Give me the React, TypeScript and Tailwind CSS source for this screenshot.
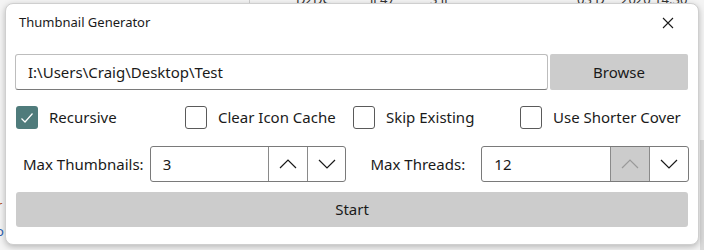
import React from "react";

const ChevronUp = ({ color = "#1a1a1a" }: { color?: string }) => (
  <svg width="18" height="10" viewBox="0 0 18 10" fill="none">
    <polyline points="1,9 9,1 17,9" stroke={color} strokeWidth="1.2" />
  </svg>
);

const ChevronDown = ({ color = "#1a1a1a" }: { color?: string }) => (
  <svg width="18" height="10" viewBox="0 0 18 10" fill="none">
    <polyline points="1,1 9,9 17,1" stroke={color} strokeWidth="1.2" />
  </svg>
);

const CheckBox = ({ label, checked }: { label: string; checked?: boolean }) => (
  <div className="flex items-center gap-[11px] whitespace-nowrap">
    {checked ? (
      <div className="w-[22px] h-[23px] rounded-[3px] bg-[#4f7b7b] flex items-center justify-center">
        <svg width="14" height="12" viewBox="0 0 14 12" fill="none">
          <polyline points="1.5,6.5 5,10 12.5,1.5" stroke="#ffffff" strokeWidth="1.2" />
        </svg>
      </div>
    ) : (
      <div className="w-[22px] h-[23px] rounded-[3px] border border-[#5a5a5a] bg-white" />
    )}
    <span className="text-[15px] text-[#1a1a1a] leading-none">{label}</span>
  </div>
);

const Spinner = ({
  value,
  textWidth,
  upDisabled,
}: {
  value: string;
  textWidth: string;
  upDisabled?: boolean;
}) => (
  <div className="flex h-[36px] border border-[#7a7a7a] rounded-[3px] overflow-hidden bg-white">
    <div className={`${textWidth} flex items-center pl-[12px] text-[15px] text-[#1a1a1a]`}>
      {value}
    </div>
    <div
      className={`w-[39px] border-l border-[#8a8a8a] flex items-center justify-center ${
        upDisabled ? "bg-[#cccccc]" : "bg-white"
      }`}
    >
      <ChevronUp color={upDisabled ? "#9a9a9a" : "#1a1a1a"} />
    </div>
    <div className="w-[39px] border-l border-[#8a8a8a] flex items-center justify-center">
      <ChevronDown />
    </div>
  </div>
);

export default function App() {
  return (
    <div className="w-[704px] h-[250px] bg-[#f4f4f4] relative overflow-hidden font-['Noto_Sans',sans-serif]">
      {/* fenêtre derrière */}
      <div className="absolute top-[-10px] left-[296px] text-[13px] text-[#333]">D2DC</div>
      <div className="absolute top-[-10px] left-[370px] text-[13px] text-[#333]">il 47</div>
      <div className="absolute top-[-10px] left-[430px] text-[13px] text-[#333]">3 ll</div>
      <div className="absolute top-[-10px] left-[577px] text-[13px] text-[#333]">03 D</div>
      <div className="absolute top-[-10px] left-[621px] text-[13px] text-[#333]">2020 14:30</div>
      <div className="absolute top-0 left-[249px] w-px h-[4px] bg-[#cfcfcf]" />
      <div className="absolute top-[196px] left-[-3px] text-[13px] text-[#b5521b]">r</div>
      <div className="absolute top-[222px] left-[-4px] text-[13px] text-[#2a5db0]">o</div>
      <div className="absolute top-[140px] left-[700px] w-[4px] h-[110px] bg-[#dadada]" />

      {/* dialog */}
      <div className="absolute left-[5px] top-[3px] w-[694px] h-[242px] bg-white rounded-[8px] border border-[#cfcfcf] shadow-[0_2px_6px_rgba(0,0,0,0.25)] flex flex-col px-[9px]">
        <div className="h-[37px] flex items-center justify-between">
          <span className="pl-[4px] text-[13px] text-[#1a1a1a]">Thumbnail Generator</span>
          <svg width="12" height="12" viewBox="0 0 12 12" className="mr-[15px]">
            <path d="M1 1 L11 11 M11 1 L1 11" stroke="#1a1a1a" strokeWidth="1.1" />
          </svg>
        </div>

        <div className="mt-[13px] flex h-[36px] gap-[2px]">
          <div className="w-[533px] border border-[#bdbdbd] border-b-[#7a7a7a] rounded-[3px] flex items-center pl-[12px] text-[15px] text-[#1a1a1a]">
            I:\Users\Craig\Desktop\Test
          </div>
          <button className="w-[138px] bg-[#cccccc] rounded-[2px] text-[15px] text-[#1a1a1a]">
            Browse
          </button>
        </div>

        <div className="mt-[16px] h-[23px] grid grid-cols-[169px_168px_167px_1fr] pl-[1px]">
          <CheckBox label="Recursive" checked />
          <CheckBox label="Clear Icon Cache" />
          <CheckBox label="Skip Existing" />
          <CheckBox label="Use Shorter Cover" />
        </div>

        <div className="mt-[17px] flex items-center h-[36px]">
          <span className="w-[135px] pl-[8px] text-[15px] text-[#1a1a1a] whitespace-nowrap">
            Max Thumbnails:
          </span>
          <Spinner value="3" textWidth="w-[117px]" />
          <span className="w-[135px] pl-[24px] text-[15px] text-[#1a1a1a] whitespace-nowrap">
            Max Threads:
          </span>
          <Spinner value="12" textWidth="w-[128px]" upDisabled />
        </div>

        <button className="mt-[10px] ml-[1px] w-[672px] h-[35px] bg-[#cccccc] rounded-[3px] text-[15px] text-[#1a1a1a]">
          Start
        </button>
      </div>
    </div>
  );
}
